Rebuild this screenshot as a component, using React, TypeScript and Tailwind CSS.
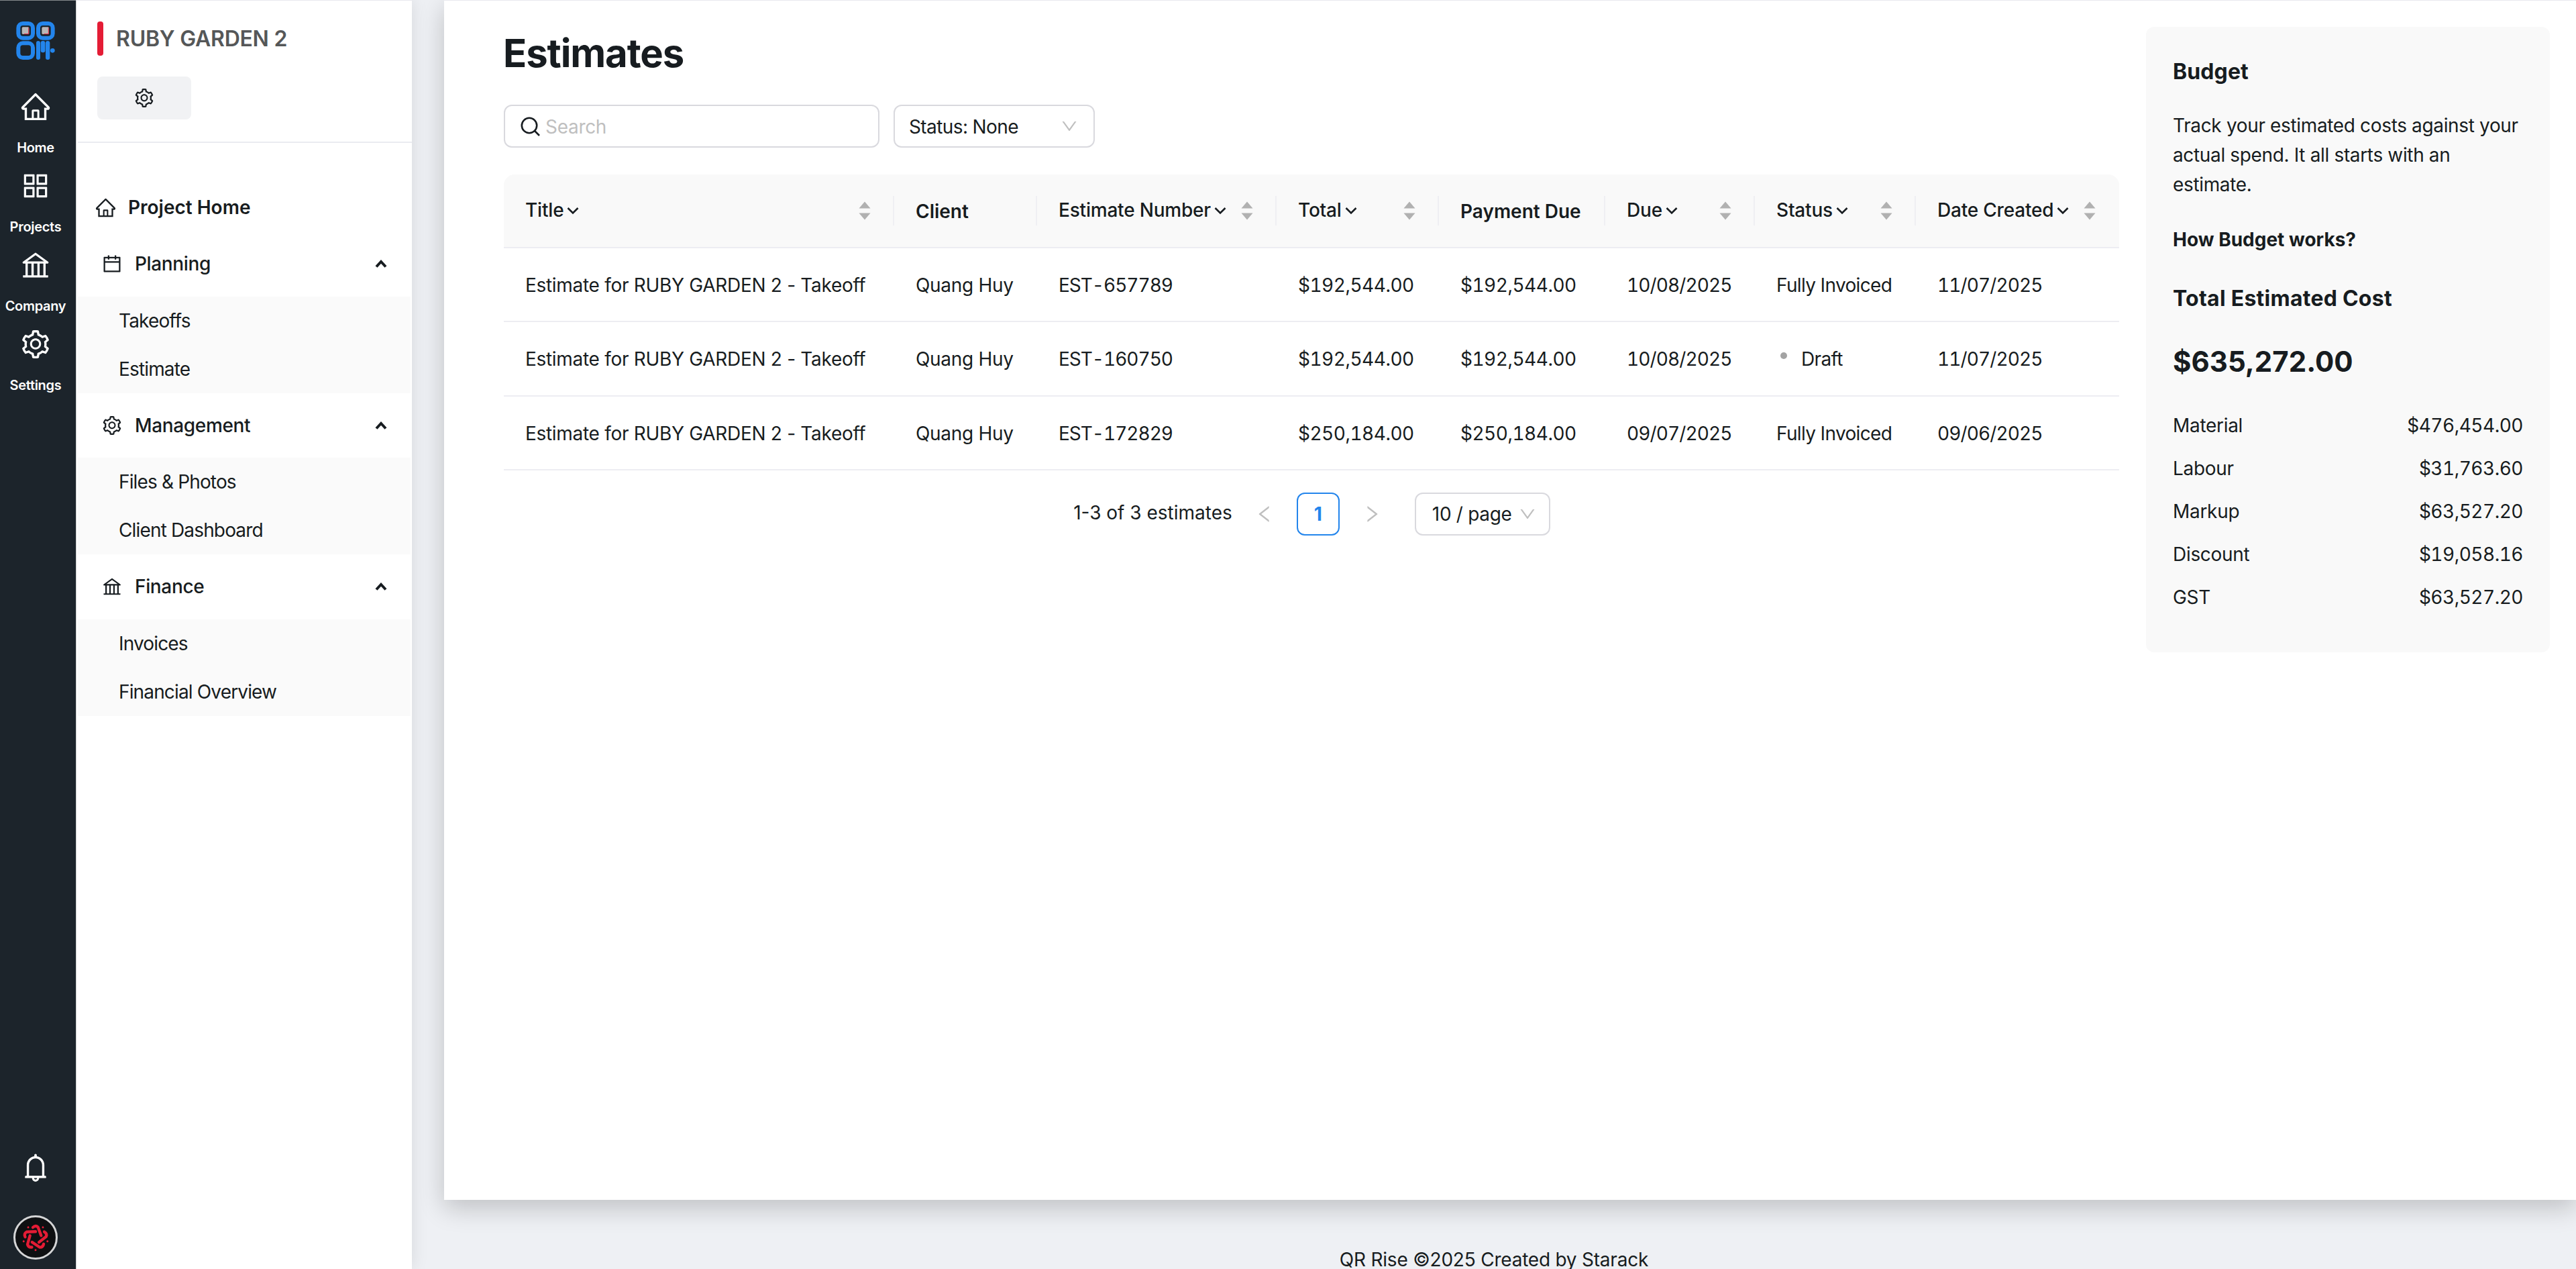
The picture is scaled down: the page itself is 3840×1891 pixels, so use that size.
import { useState } from "react";
import type { ReactNode } from "react";
import type { IconType } from "react-icons";
import clsx from "clsx";
import {
  AiOutlineAppstore,
  AiOutlineBank,
  AiOutlineBell,
  AiOutlineCalendar,
  AiOutlineDown,
  AiOutlineHome,
  AiOutlineLeft,
  AiOutlineRight,
  AiOutlineSetting,
} from "react-icons/ai";

type NavGroup = {
  id: string;
  label: string;
  icon: IconType;
  items: string[];
};

type Estimate = {
  title: string;
  client: string;
  number: string;
  total: string;
  paymentDue: string;
  due: string;
  status: "Fully Invoiced" | "Draft";
  created: string;
};

const RAIL_ITEMS: { label: string; icon: IconType }[] = [
  { label: "Home", icon: AiOutlineHome },
  { label: "Projects", icon: AiOutlineAppstore },
  { label: "Company", icon: AiOutlineBank },
  { label: "Settings", icon: AiOutlineSetting },
];

const NAV_GROUPS: NavGroup[] = [
  { id: "planning", label: "Planning", icon: AiOutlineCalendar, items: ["Takeoffs", "Estimate"] },
  { id: "management", label: "Management", icon: AiOutlineSetting, items: ["Files & Photos", "Client Dashboard"] },
  { id: "finance", label: "Finance", icon: AiOutlineBank, items: ["Invoices", "Financial Overview"] },
];

const COLUMNS = [
  { label: "Title", sortable: true },
  { label: "Client", sortable: false },
  { label: "Estimate Number", sortable: true },
  { label: "Total", sortable: true },
  { label: "Payment Due", sortable: false },
  { label: "Due", sortable: true },
  { label: "Status", sortable: true },
  { label: "Date Created", sortable: true },
];

const ESTIMATES: Estimate[] = [
  {
    title: "Estimate for RUBY GARDEN 2 - Takeoff",
    client: "Quang Huy",
    number: "EST-657789",
    total: "$192,544.00",
    paymentDue: "$192,544.00",
    due: "10/08/2025",
    status: "Fully Invoiced",
    created: "11/07/2025",
  },
  {
    title: "Estimate for RUBY GARDEN 2 - Takeoff",
    client: "Quang Huy",
    number: "EST-160750",
    total: "$192,544.00",
    paymentDue: "$192,544.00",
    due: "10/08/2025",
    status: "Draft",
    created: "11/07/2025",
  },
  {
    title: "Estimate for RUBY GARDEN 2 - Takeoff",
    client: "Quang Huy",
    number: "EST-172829",
    total: "$250,184.00",
    paymentDue: "$250,184.00",
    due: "09/07/2025",
    status: "Fully Invoiced",
    created: "09/06/2025",
  },
];

const COSTS = [
  { label: "Material", value: "$476,454.00" },
  { label: "Labour", value: "$31,763.60" },
  { label: "Markup", value: "$63,527.20" },
  { label: "Discount", value: "$19,058.16" },
  { label: "GST", value: "$63,527.20" },
];

const TABLE_GRID = "grid grid-cols-[582px_213px_357px_242px_248px_223px_240px_303px]";

function Logo() {
  return (
    <svg viewBox="0 0 174 174" className="h-[58px] w-[58px]" fill="none">
      <g stroke="#2385ec" strokeWidth="18">
        <rect x="10" y="9" width="65" height="65" rx="20" />
        <rect x="99" y="9" width="65" height="65" rx="20" />
        <rect x="10" y="97" width="65" height="65" rx="20" />
      </g>
      <g fill="#b9b7b8">
        <rect x="26" y="25" width="32" height="32" rx="5" />
        <rect x="115" y="25" width="32" height="32" rx="5" />
      </g>
      <g stroke="#e0203f" strokeWidth="3">
        <path d="M35 56H56V28" />
        <path d="M124 56H145V28" />
      </g>
      <g fill="#2385ec">
        <rect x="90" y="87" width="18" height="84" rx="9" />
        <rect x="110" y="87" width="20" height="52" rx="9" />
        <rect x="132" y="87" width="19" height="84" rx="9" />
        <circle cx="163" cy="130" r="10" />
      </g>
    </svg>
  );
}

function Avatar() {
  const turns = [0, 72, 144, 216, 288];
  return (
    <div className="flex h-[66px] w-[66px] items-center justify-center rounded-full border-[3px] border-[#d4d5d6] bg-[#0e1012]">
      <svg viewBox="-66 -66 132 132" className="h-11 w-11" fill="none">
        {turns.map((deg) => (
          <g key={deg} transform={`rotate(${deg})`}>
            <path d="M-12 -45 Q0 -56 11 -46 L25 -8" stroke="#e41c35" strokeWidth="13" strokeLinecap="round" strokeLinejoin="round" />
            <circle cx="0" cy="56" r="4.5" fill="#e41c35" />
          </g>
        ))}
      </svg>
    </div>
  );
}

function Rail() {
  return (
    <aside className="z-20 flex w-[113px] shrink-0 flex-col items-center border-t border-[#85898c] bg-[#1c242b] pt-[31px] pr-[7px] pb-3.5 text-white">
      <Logo />
      <nav className="mt-[45px] flex flex-col">
        {RAIL_ITEMS.map(({ label, icon: Icon }) => (
          <a key={label} className="flex h-[118px] flex-col items-center">
            <Icon className="h-12 w-12" />
            <span className="mt-[25px] text-[20px] leading-6 font-semibold tracking-[-0.3px]">{label}</span>
          </a>
        ))}
      </nav>
      <AiOutlineBell className="mt-auto mb-[47px] h-12 w-12" />
      <Avatar />
    </aside>
  );
}

function Sidebar() {
  const [closed, setClosed] = useState<Record<string, boolean>>({});
  const toggle = (id: string) => setClosed((prev) => ({ ...prev, [id]: !prev[id] }));

  return (
    <aside className="z-10 w-[501px] shrink-0 border-t border-l border-t-[#e9e9ef] border-l-[#c9cbcd] bg-white shadow-[0_0_24px_rgba(0,0,0,0.1)]">
      <div className="ml-0.5 flex h-[212px] flex-col border-b-2 border-[#eaebf0] pt-[31px] pl-[29px]">
        <div className="flex items-center">
          <span className="h-[51px] w-[9px] rounded-[4px] bg-[#e41c35]" />
          <h2 className="ml-[19px] text-[32px] leading-[51px] font-semibold tracking-[-0.25px] text-[#555758]">RUBY GARDEN 2</h2>
        </div>
        <button className="mt-[31px] flex h-16 w-[140px] items-center justify-center rounded-lg bg-[#f1f2f4]">
          <AiOutlineSetting className="h-8 w-8" />
        </button>
      </div>
      <nav className="pt-[60px]">
        <a className="flex h-[72px] items-center gap-[17px] pl-[27px] font-semibold">
          <AiOutlineHome className="h-[33px] w-[33px]" />
          Project Home
        </a>
        {NAV_GROUPS.map(({ id, label, icon: Icon, items }) => (
          <section key={id}>
            <button
              onClick={() => toggle(id)}
              className="flex h-[96.5px] w-full items-center gap-[18px] pr-[37px] pl-[37px] font-medium tracking-[-0.35px]"
            >
              <Icon className="h-8 w-8" />
              {label}
              <svg viewBox="0 0 18 12" className={clsx("ml-auto h-3 w-[18px]", closed[id] && "rotate-180")} fill="none">
                <path d="M2 10.5 9 3l7 7.5" stroke="currentColor" strokeWidth="4" />
              </svg>
            </button>
            {!closed[id] && (
              <div className="mr-0.5 ml-0.5 bg-[#fafafa]">
                {items.map((item) => (
                  <a key={item} className="flex h-[72px] items-center pl-[61px] tracking-[-0.85px]">
                    {item}
                  </a>
                ))}
              </div>
            )}
          </section>
        ))}
      </nav>
    </aside>
  );
}

function Sorter() {
  return (
    <svg viewBox="0 0 18 28" className="h-7 w-[18px]" fill="#b1b1b1">
      <path d="M9 0.5 17.5 10.5H0.5Z" />
      <path d="M9 27.5 17.5 17.5H0.5Z" />
    </svg>
  );
}

function HeaderCell({ label, sortable, last }: { label: string; sortable: boolean; last: boolean }) {
  return (
    <div className={clsx("my-auto flex h-11 items-center pl-8", last ? "pr-[35px]" : "border-r-2 border-[#efeff3] pr-[33px]")}>
      {sortable ? (
        <>
          <span className="pb-0.5 font-medium tracking-[-0.2px]">{label}</span>
          <svg viewBox="0 0 18 12" className="ml-[5px] h-3 w-[18px]" fill="none">
            <path d="M1.5 2 9 9.5 16.5 2" stroke="currentColor" strokeWidth="2.6" />
          </svg>
          <span className="ml-auto">
            <Sorter />
          </span>
        </>
      ) : (
        <span className="pt-0.5 font-semibold">{label}</span>
      )}
    </div>
  );
}

function Cell({ children, className }: { children: ReactNode; className?: string }) {
  return <div className={clsx("flex items-center pt-0.5 pl-8 whitespace-nowrap", className)}>{children}</div>;
}

function EstimateTable() {
  return (
    <div className="mt-10 w-[2408px]">
      <div className={clsx(TABLE_GRID, "h-[110px] rounded-t-2xl border-b-2 border-[#ededf2] bg-[#f9f9f9]")}>
        {COLUMNS.map((col, i) => (
          <HeaderCell key={col.label} {...col} last={i === COLUMNS.length - 1} />
        ))}
      </div>
      {ESTIMATES.map((row) => (
        <div key={row.number} className={clsx(TABLE_GRID, "h-[110.3px] border-b-2 border-[#ededf2]")}>
          <Cell className="tracking-[-0.3px]">{row.title}</Cell>
          <Cell className="tracking-[-0.3px]">{row.client}</Cell>
          <Cell className="tracking-[-1px] tabular-nums">{row.number}</Cell>
          <Cell className="tracking-[-0.5px] tabular-nums">{row.total}</Cell>
          <Cell className="tracking-[-0.5px] tabular-nums">{row.paymentDue}</Cell>
          <Cell className="tracking-[-0.9px] tabular-nums">{row.due}</Cell>
          <Cell className="tracking-[-0.65px]">
            {row.status === "Draft" && <span className="mr-[21px] mb-2.5 ml-1.5 h-2.5 w-2.5 rounded-full bg-[#a3a3a3]" />}
            {row.status}
          </Cell>
          <Cell className="tracking-[-0.9px] tabular-nums">{row.created}</Cell>
        </div>
      ))}
    </div>
  );
}

function Pagination() {
  return (
    <div className="mt-[33px] flex h-16 items-center justify-center gap-4 pl-px">
      <span className="pb-[3px]">1-3 of 3 estimates</span>
      <button className="flex h-16 w-16 items-center justify-center text-[#bfbfbf]">
        <AiOutlineLeft className="h-8 w-8" />
      </button>
      <button className="flex h-16 w-16 items-center justify-center rounded-xl border-2 border-[#2385ec] font-bold text-[#2385ec]">
        1
      </button>
      <button className="flex h-16 w-16 items-center justify-center text-[#bfbfbf]">
        <AiOutlineRight className="h-8 w-8" />
      </button>
      <button className="ml-4 flex h-16 w-[202px] items-center rounded-xl border-2 border-[#d9d9de] pr-[18px] pl-6 tracking-[-0.3px]">
        10 / page
        <AiOutlineDown className="ml-auto h-7 w-7 text-[#bfbfbf]" />
      </button>
    </div>
  );
}

function Budget() {
  return (
    <aside className="mt-[39px] ml-10 h-[932px] w-[602px] rounded-xl bg-[#f9f9f9] pt-[47px] pr-10 pl-10">
      <h3 className="text-[32px] leading-10 font-bold tracking-[0.1px]">Budget</h3>
      <p className="mt-[38px] leading-[44px] tracking-[-0.35px]">
        Track your estimated costs against your actual spend. It all starts with an estimate.
      </p>
      <p className="mt-[38px] leading-[44px] font-bold">How Budget works?</p>
      <h3 className="mt-[46px] text-[32px] leading-10 font-bold tracking-[0.25px]">Total Estimated Cost</h3>
      <div className="mt-11 text-[42px] leading-[60px] font-bold">$635,272.00</div>
      <dl className="mt-[33px]">
        {COSTS.map((cost) => (
          <div key={cost.label} className="flex h-16 items-center justify-between">
            <dt className="tracking-[-0.3px]">{cost.label}</dt>
            <dd className="tracking-[-0.5px] tabular-nums">{cost.value}</dd>
          </div>
        ))}
      </dl>
    </aside>
  );
}

export default function App() {
  return (
    <div className="flex h-[1891px] w-[3840px] overflow-hidden bg-[#eef0f4] font-['Inter',sans-serif] text-[28px] leading-[36px] text-[#171c20]">
      <Rail />
      <Sidebar />
      <div className="flex flex-1 flex-col">
        <main className="ml-12 flex h-[1788px] shrink-0 border-t border-[#e9e9ef] bg-white pl-[89px] shadow-[0_12px_36px_rgba(0,0,0,0.2)]">
          <div>
            <h1 className="mt-12 -ml-px text-[58px] leading-[60px] font-bold tracking-[-1.1px]">Estimates</h1>
            <div className="mt-[47px] flex gap-[21px]">
              <label className="flex h-16 w-[560px] items-center rounded-xl border-2 border-[#d9d9de] pl-[23px]">
                <svg viewBox="0 0 29 29" className="h-[29px] w-[29px]" fill="none" stroke="currentColor" strokeWidth="2.6">
                  <circle cx="13" cy="13" r="11.2" />
                  <path d="M20.5 20.5 28 28" />
                </svg>
                <input
                  placeholder="Search"
                  className="ml-2 flex-1 pt-0.5 tracking-[-0.3px] outline-none placeholder:text-[#bfbfbf]"
                />
              </label>
              <button className="flex h-16 w-[300px] items-center rounded-xl border-2 border-[#d9d9de] pr-[22px] pl-[21px] tracking-[-0.6px]">
                <span className="pt-0.5">Status: None</span>
                <AiOutlineDown className="ml-auto h-7 w-7 text-[#bfbfbf]" />
              </button>
            </div>
            <EstimateTable />
            <Pagination />
          </div>
          <Budget />
        </main>
        <footer className="pt-[77px] text-center leading-6 tracking-[-0.22px]">QR Rise ©2025 Created by Starack</footer>
      </div>
    </div>
  );
}
